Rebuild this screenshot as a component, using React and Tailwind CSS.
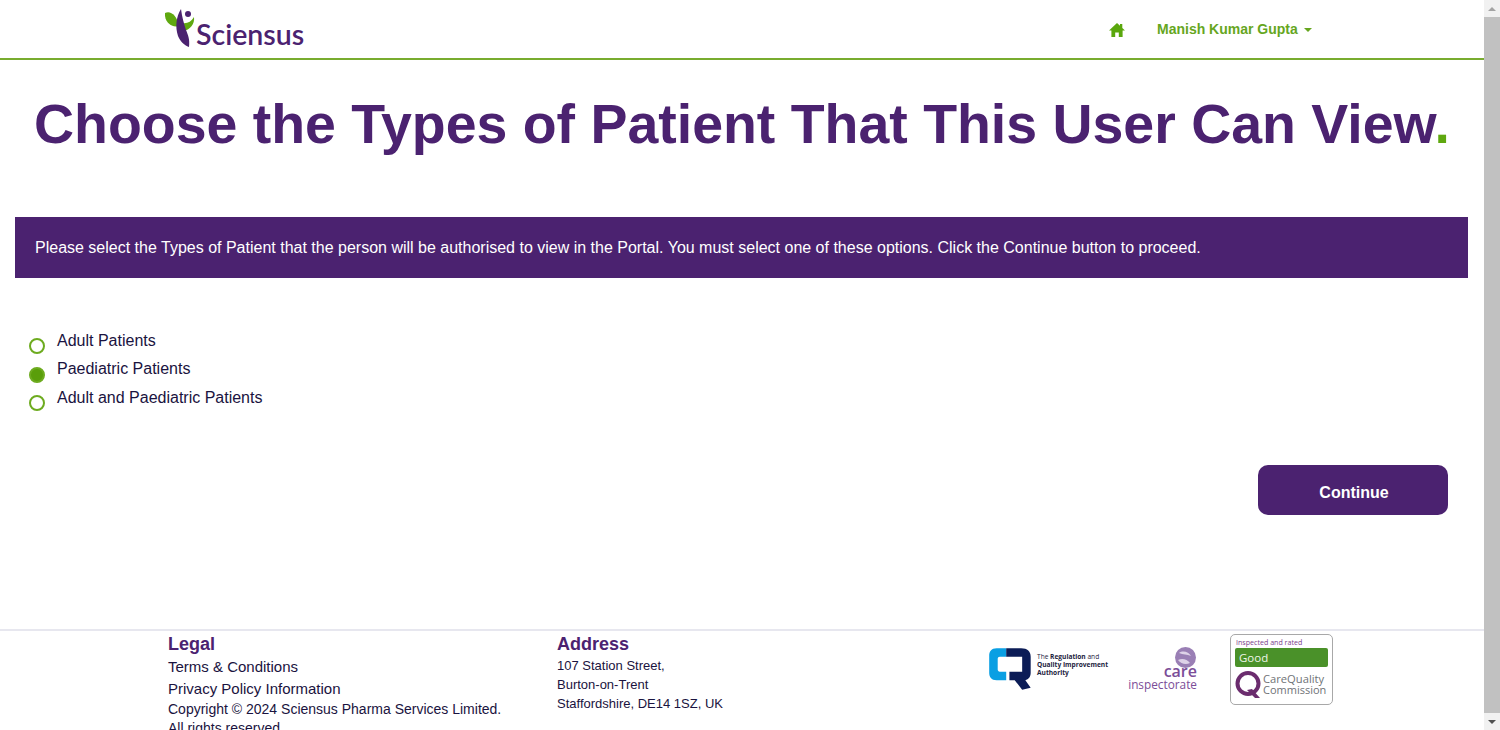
export default function App() {
  const options = [
    { label: "Adult Patients", on: false },
    { label: "Paediatric Patients", on: true },
    { label: "Adult and Paediatric Patients", on: false },
  ];
  return (
    <div className="flex h-[730px] w-full overflow-hidden bg-white font-['Liberation_Sans',Arial,sans-serif]">
      <div className="flex min-w-0 flex-1 flex-col">
        <header className="flex h-[60px] shrink-0 items-start border-b-2 border-[#78ac2f] pl-[164px]">
          <div className="flex w-[142px] items-start">
            <svg width="32" height="40" viewBox="0 0 32 40" className="mt-2 shrink-0">
              <path d="M1 5C6 2 13 7 15 18C8 20 0 14 1 5Z" fill="#5fa80f" />
              <path d="M19 23C26 22 31 16 30 9C27 14 23 16 18 15Z" fill="#5fa80f" />
              <path d="M17 1C12 9 11 19 14 28C16 33 20 37 25 39C26 31 24 27 22 22C20 16 18 9 17 1Z" fill="#4b2270" />
              <circle cx="24" cy="6" r="3" fill="#4b2270" />
            </svg>
            <span className="mt-[17px] font-['Lato',sans-serif] text-[28.5px] leading-[34px] font-semibold text-[#4b2270]">Sciensus</span>
          </div>
          <svg width="16" height="14" viewBox="0 0 16 14" className="mt-[23px] ml-[803px] shrink-0">
            <path d="M8 0L11 2.8V1H13.3V5L16 7.5H13.6V14H9.8V9.5H6.2V14H2.4V7.5H0Z" fill="#5aa70d" />
          </svg>
          <span className="mt-[19px] ml-[32px] text-[14px] leading-5 font-bold whitespace-nowrap text-[#66a61e]">Manish Kumar Gupta</span>
          <span className="mt-[28px] ml-[6px] h-0 w-0 border-x-4 border-t-4 border-x-transparent border-t-[#66a61e]" />
        </header>

        <h1 className="mt-[28px] text-center text-[55.45px] leading-[72px] font-bold whitespace-nowrap text-[#4b2270]">
          Choose the Types of Patient That This User Can View<span className="text-[#5fa80f]">.</span>
        </h1>

        <div className="mt-[57px] mr-4 ml-[15px] flex h-[61px] shrink-0 items-center bg-[#4b2270] px-5 text-[16px] text-white">
          Please select the Types of Patient that the person will be authorised to view in the Portal. You must select one of these options. Click the Continue button to proceed.
        </div>

        <div className="mt-[47.75px] flex flex-col pl-[28.5px]">
          {options.map((o) => (
            <label key={o.label} className="flex h-[28.5px] items-start gap-[12.5px] text-[16px] leading-[28px] text-[#1a1340]">
              <span className={"mt-[12.5px] h-4 w-4 shrink-0 rounded-full border-2 border-[#6dab1f] " + (o.on ? "bg-[#5a9e0a]" : "bg-white")} />
              <span className="mt-px">{o.label}</span>
            </label>
          ))}
        </div>

        <div className="mt-[53.75px] flex justify-end pr-[36px]">
          <button className="h-[50px] w-[190px] rounded-[10px] bg-[#4b2270] pt-[5px] pl-[2px] text-[16px] font-bold text-white">Continue</button>
        </div>

        <footer className="mt-[114px] flex shrink-0 border-t-2 border-[#e7e7ef] pl-[168px] text-[#1a1340]">
          <div className="w-[389px] shrink-0">
            <h3 className="mt-px text-[18px] leading-6 font-bold text-[#4b2270]">Legal</h3>
            <p className="text-[15px] leading-[22px]">Terms &amp; Conditions</p>
            <p className="text-[15px] leading-[22px]">Privacy Policy Information</p>
            <p className="w-[345px] text-[14px] leading-[19px]">Copyright © 2024 Sciensus Pharma Services Limited.<br />All rights reserved.</p>
          </div>
          <div className="w-[429px] shrink-0">
            <h3 className="mt-px text-[18px] leading-6 font-bold text-[#4b2270]">Address</h3>
            <p className="text-[13px] leading-[19px]">107 Station Street,<br />Burton-on-Trent<br />Staffordshire, DE14 1SZ, UK</p>
          </div>
          <div className="mt-[14px] flex w-[127px] shrink-0 items-start">
            <svg width="50" height="47" viewBox="0 0 47 44" className="shrink-0">
              <path d="M19 3H10C5 3 3 6 3 10V26C3 30 5 33 10 33H19V25H13C11.8 25 11 24.2 11 23V13C11 11.8 11.8 11 13 11H19Z" fill="#0a9fe3" />
              <path d="M19 3H33C39 3 42 6 42 11V26C42 30 40 32 37 33L42 40L34 42L27 33H22V25H34V11H19Z" fill="#0b1c56" />
            </svg>
            <div className="mt-2 ml-px font-['Open_Sans',sans-serif] text-[6.6px] leading-[8px] font-bold whitespace-nowrap text-[#1c2340]">
              <span className="font-normal">The</span> Regulation <span className="font-normal">and</span><br />Quality Improvement<br />Authority
            </div>
          </div>
          <div className="mt-4 ml-4 flex w-[68px] shrink-0 flex-col items-end">
            <svg width="21" height="21" viewBox="0 0 21 21" className="mr-px shrink-0">
              <circle cx="10.5" cy="10.5" r="10.5" fill="#9a7fb5" />
              <path d="M4 6C8 3 14 5 16 9C12 7 8 8 4 6Z M3 13C7 11 12 12 15 16C11 18 6 17 3 13Z" fill="#ded2e8" />
            </svg>
            <span className="-mt-[3px] font-['Open_Sans',sans-serif] text-[16px] leading-[13px] font-semibold text-[#7b4d98]">care</span>
            <span className="font-['Open_Sans',sans-serif] text-[11.8px] leading-[13px] whitespace-nowrap text-[#7b4d98]">inspectorate</span>
          </div>
          <div className="mt-[3px] ml-[33px] flex h-[71px] w-[103px] shrink-0 flex-col rounded-[5px] border border-[#a8a8a8] px-[4px] pt-[2px]">
            <span className="pl-px font-['Open_Sans',sans-serif] text-[7.1px] leading-[10px] whitespace-nowrap text-[#7b3f8c]">Inspected and rated</span>
            <div className="mt-px flex h-[19px] shrink-0 items-center rounded-[2px] bg-[#4a9129] pl-[4px] font-['Open_Sans',sans-serif] text-[11.5px] text-[#eef5e8]">Good</div>
            <div className="mt-[3px] flex items-start">
              <svg width="27" height="29" viewBox="0 0 27 29" className="shrink-0">
                <circle cx="13" cy="13.5" r="10.5" fill="none" stroke="#6b2c6e" strokeWidth="4" />
                <path d="M12 20L20 28H25L17 19Z" fill="#6b2c6e" />
              </svg>
              <div className="ml-px flex flex-col pt-[3px] font-['Open_Sans',sans-serif] text-[#6f7376]">
                <span className="text-[11.2px] leading-[11px] whitespace-nowrap">CareQuality</span>
                <span className="text-[11px] leading-[11px] whitespace-nowrap">Commission</span>
              </div>
            </div>
          </div>
        </footer>
      </div>

      <div className="flex h-full w-4 shrink-0 flex-col items-center bg-[#f1f1f1]">
        <div className="flex h-[17px] w-full shrink-0 items-center justify-center">
          <span className="h-0 w-0 border-x-[4px] border-b-[4px] border-x-transparent border-b-[#a3a3a3]" />
        </div>
        <div className="w-full flex-1 bg-[#c1c1c1]" />
        <div className="flex h-[17px] w-full shrink-0 items-center justify-center">
          <span className="h-0 w-0 border-x-[4px] border-t-[4px] border-x-transparent border-t-[#505050]" />
        </div>
      </div>
    </div>
  );
}
